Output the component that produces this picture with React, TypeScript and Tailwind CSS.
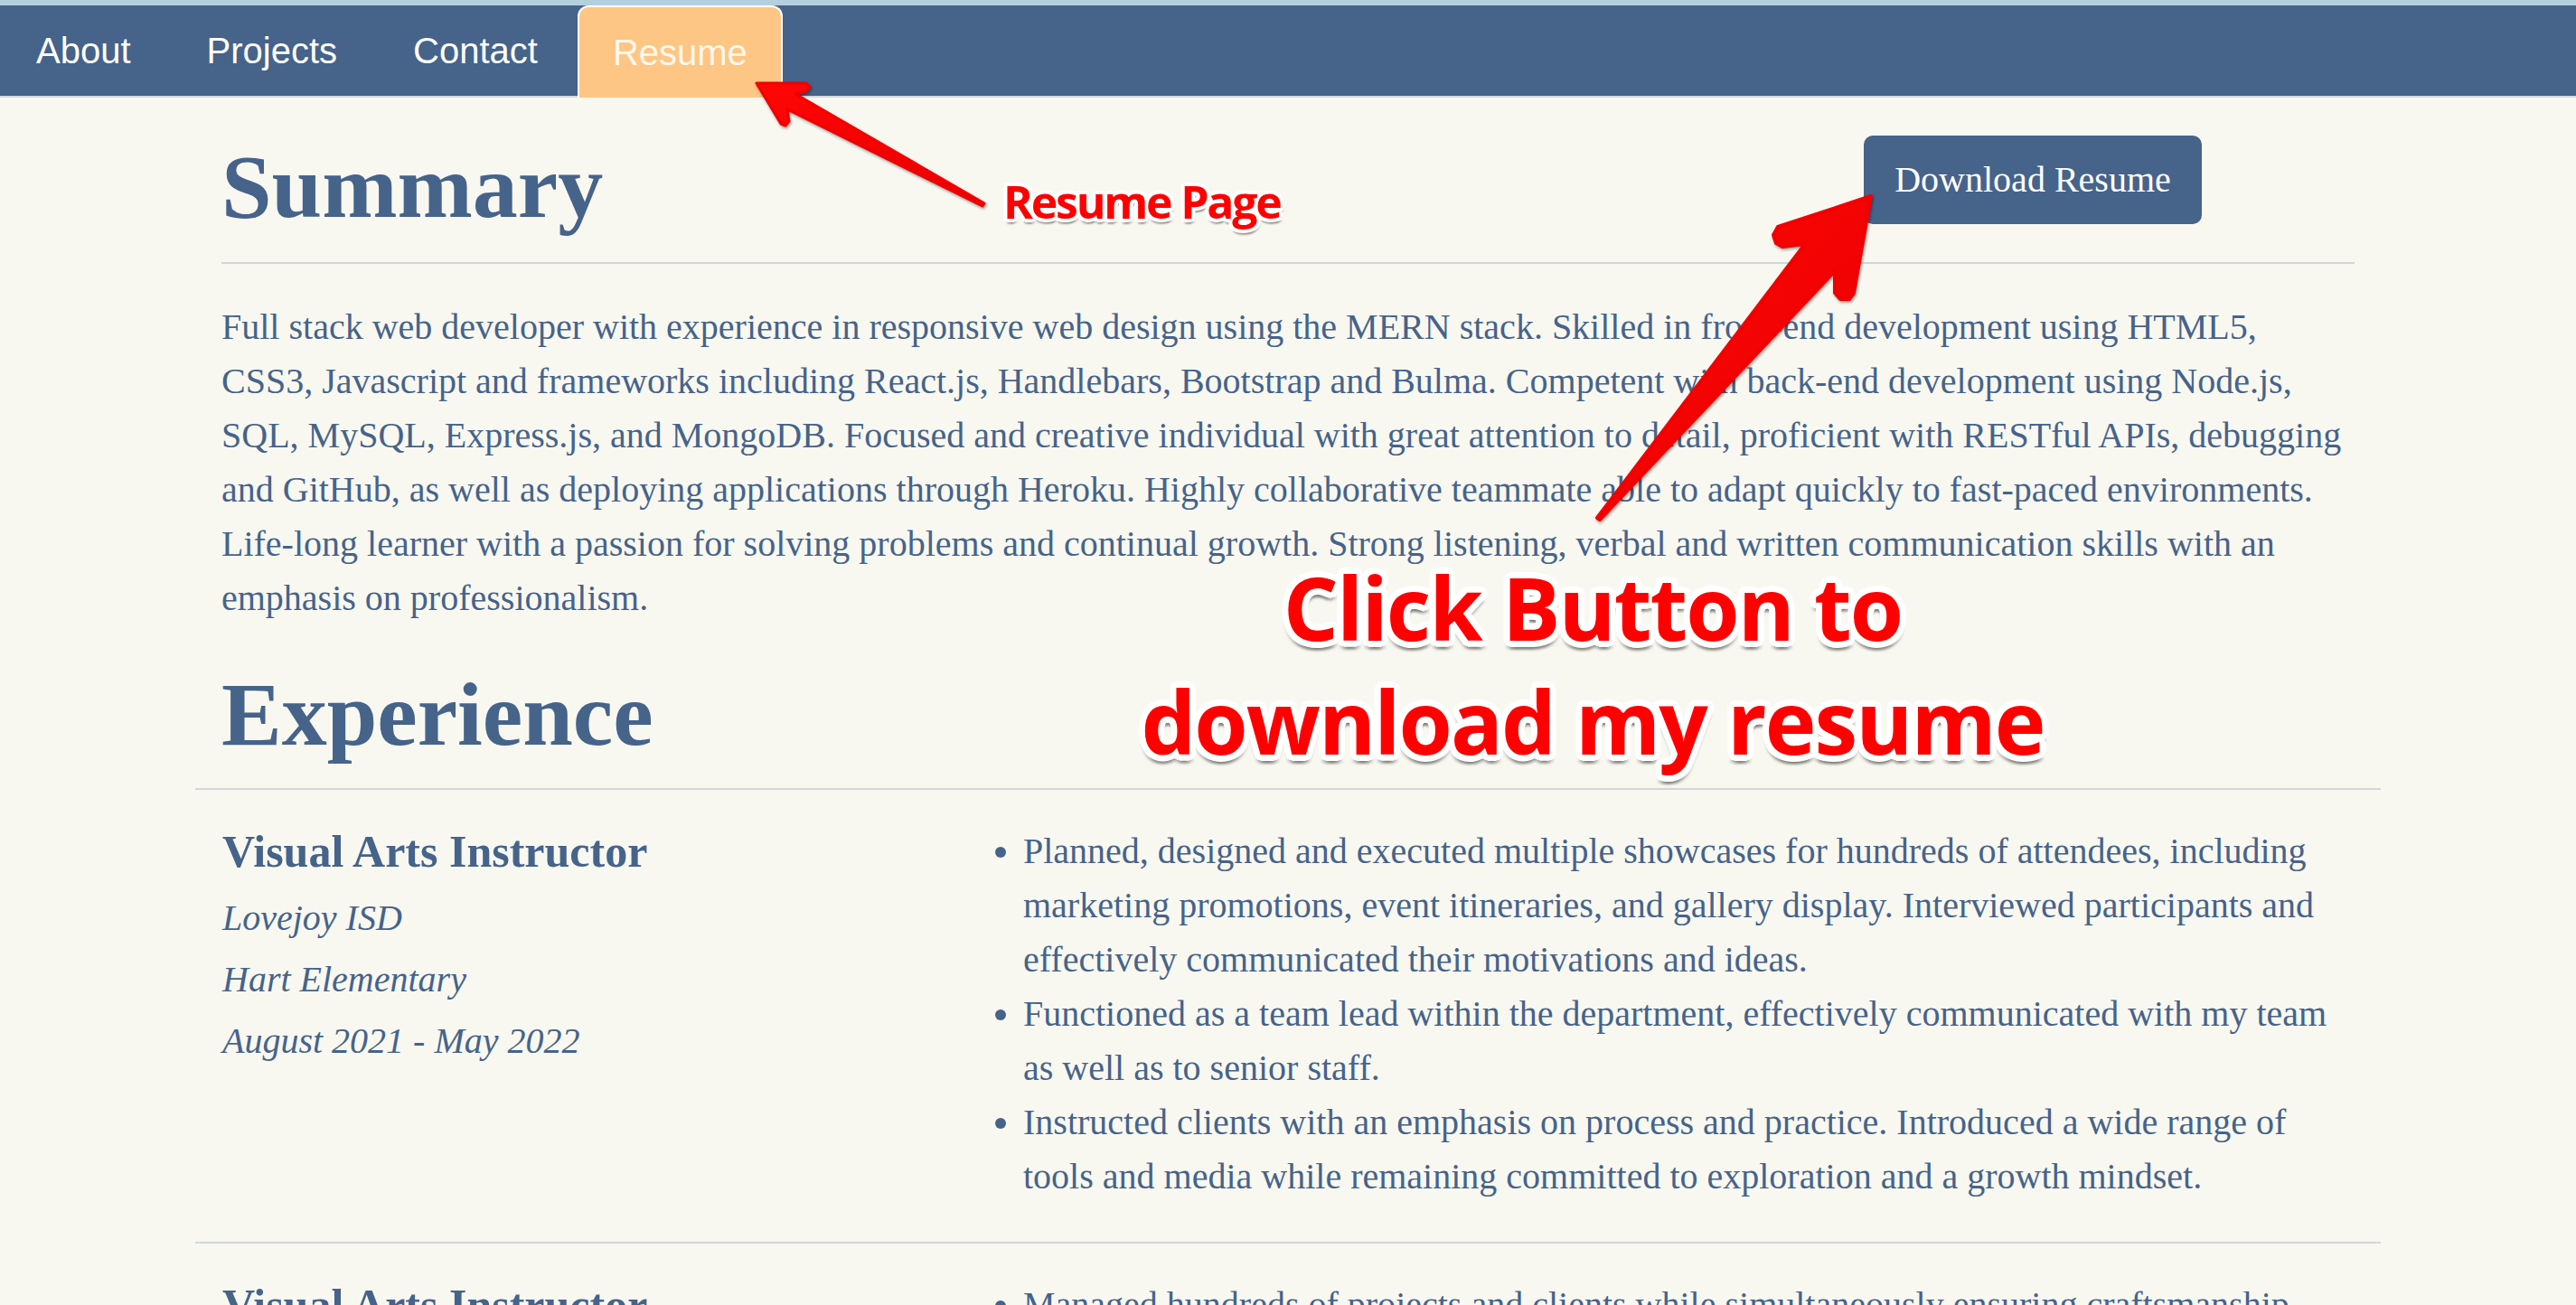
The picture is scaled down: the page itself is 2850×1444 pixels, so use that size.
import React from "react";

type Job = {
  title: string;
  place: string[];
  points: string[];
};

const jobs: Job[] = [
  {
    title: "Visual Arts Instructor",
    place: ["Lovejoy ISD", "Hart Elementary", "August 2021 - May 2022"],
    points: [
      "Planned, designed and executed multiple showcases for hundreds of attendees, including marketing promotions, event itineraries, and gallery display. Interviewed participants and effectively communicated their motivations and ideas.",
      "Functioned as a team lead within the department, effectively communicated with my team as well as to senior staff.",
      "Instructed clients with an emphasis on process and practice. Introduced a wide range of tools and media while remaining committed to exploration and a growth mindset.",
    ],
  },
  {
    title: "Visual Arts Instructor",
    place: [],
    points: [
      "Managed hundreds of projects and clients while simultaneously ensuring craftsmanship, quality and timely delivery.",
    ],
  },
];

const navLinks = ["About", "Projects", "Contact"];

// white outline + soft grey drop, like the markup tool annotations
const outlineSmall =
  "[text-shadow:4px_0_0_#fff,-4px_0_0_#fff,0_4px_0_#fff,0_-4px_0_#fff,3px_3px_0_#fff,-3px_3px_0_#fff,3px_-3px_0_#fff,-3px_-3px_0_#fff,0_6px_2px_rgba(0,0,0,0.3),3px_5px_2px_rgba(0,0,0,0.2)]";
const outlineBig =
  "[text-shadow:7px_0_0_#fff,-7px_0_0_#fff,0_7px_0_#fff,0_-7px_0_#fff,5px_5px_0_#fff,-5px_5px_0_#fff,5px_-5px_0_#fff,-5px_-5px_0_#fff,6px_3px_0_#fff,-6px_3px_0_#fff,6px_-3px_0_#fff,-6px_-3px_0_#fff,3px_6px_0_#fff,-3px_6px_0_#fff,3px_-6px_0_#fff,-3px_-6px_0_#fff,0_10px_3px_rgba(0,0,0,0.28),4px_9px_3px_rgba(0,0,0,0.18),-4px_9px_3px_rgba(0,0,0,0.18)]";

const Nav = () => (
  <nav className="flex h-[102px] gap-[4px] border-b-2 border-[#d3dae0] bg-[#46638a] font-['Liberation_Sans',Arial,sans-serif] text-[40px]">
    {navLinks.map((label) => (
      <a key={label} href="#" className="flex items-center px-[40px] text-white">
        {label}
      </a>
    ))}
    <a
      href="#"
      className="-mb-[2px] flex items-center rounded-t-[12px] border-2 border-b-0 border-white bg-[#fec685] px-[37px] text-[#fdf8ec]"
    >
      Resume
    </a>
  </nav>
);

const JobRow = ({ job }: { job: Job }) => (
  <div>
    <div className="grid grid-cols-3 pb-[42px] pt-[38px]">
      <div className="px-[30px]">
        <h3 className="text-[50px] font-bold leading-[60px]">{job.title}</h3>
        <div className="mt-[10px] text-[40px] italic leading-[68px]">
          {job.place.map((p) => (
            <p key={p}>{p}</p>
          ))}
        </div>
      </div>
      <div className="col-span-2 px-[30px]">
        <ul className="list-disc pl-[80px] text-[40px] leading-[60px]">
          {job.points.map((pt) => (
            <li key={pt}>{pt}</li>
          ))}
        </ul>
      </div>
    </div>
    <hr className="border-t-2 border-[#cfd7da]" />
  </div>
);

const Annotations = () => (
  <>
    <svg
      className="pointer-events-none absolute left-0 top-0 drop-shadow-[1px_2px_1.5px_rgba(0,0,0,0.35)]"
      width="2850"
      height="1444"
      viewBox="0 0 2850 1444"
    >
      <defs>
        <linearGradient id="red" x1="0" y1="0" x2="1" y2="1">
          <stop offset="0" stopColor="#ff0606" />
          <stop offset="1" stopColor="#e80000" />
        </linearGradient>
      </defs>
      {/* arrow to the Resume tab */}
      <polygon
        points="837,92 892,92 896,96 892,101 880,104 1089,225 1087,228 871,121 873,134 869,139 864,137"
        fill="url(#red)"
        stroke="#f20000"
        strokeWidth="3"
        strokeLinejoin="round"
      />
      {/* arrow to the download button */}
      <polygon
        points="2070,217 1967,251 1962,260 1965,269 1972,273 1997,270 1767,573 1770,575 2030,300 2030,324 2036,331 2046,331 2051,324"
        fill="url(#red)"
        stroke="#f20000"
        strokeWidth="4"
        strokeLinejoin="round"
      />
    </svg>

    <span
      className={`absolute left-[1110px] top-[198px] font-['Open_Sans',sans-serif] text-[50px] font-bold leading-[50px] tracking-[-0.045em] text-[#ff0000] ${outlineSmall}`}
    >
      Resume Page
    </span>

    <div
      className={`absolute left-[1262px] top-[609px] w-[1000px] text-center font-['Open_Sans',sans-serif] text-[96px] font-bold leading-[126px] tracking-[-0.02em] text-[#ff0000] ${outlineBig}`}
    >
      Click Button to
      <br />
      download my resume
    </div>
  </>
);

export default function App() {
  return (
    <div className="relative min-h-screen overflow-hidden bg-[#f8f8f1] font-['Liberation_Serif','Times_New_Roman',serif] text-[#46638a]">
      <div className="h-[6px] bg-[#b4d0de]" />
      <Nav />

      <main className="mx-auto w-[2418px]">
        <section className="px-[29px]">
          <div className="flex items-start pt-[39px]">
            <h1 className="text-[100px] font-bold leading-[120px]">Summary</h1>
            <button className="ml-auto mr-[169px] mt-[3px] flex h-[98px] w-[374px] items-center justify-center rounded-[10px] bg-[#46638a] text-[40px] text-white">
              Download Resume
            </button>
          </div>
          <hr className="mt-[23px] border-t-2 border-[#cfd7da]" />
          <p className="mt-[40px] text-[40px] leading-[60px]">
            Full stack web developer with experience in responsive web design using the MERN stack.
            Skilled in front-end development using HTML5, CSS3, Javascript and frameworks including
            React.js, Handlebars, Bootstrap and Bulma. Competent with back-end development using
            Node.js, SQL, MySQL, Express.js, and MongoDB. Focused and creative individual with great
            attention to detail, proficient with RESTful APIs, debugging and GitHub, as well as
            deploying applications through Heroku. Highly collaborative teammate able to adapt
            quickly to fast-paced environments. Life-long learner with a passion for solving problems
            and continual growth. Strong listening, verbal and written communication skills with an
            emphasis on professionalism.
          </p>
          <h1 className="mt-[39px] text-[100px] font-bold leading-[120px]">Experience</h1>
        </section>
        <hr className="mt-[21px] border-t-2 border-[#cfd7da]" />

        {jobs.map((job, i) => (
          <JobRow key={i} job={job} />
        ))}
      </main>

      <Annotations />
    </div>
  );
}
